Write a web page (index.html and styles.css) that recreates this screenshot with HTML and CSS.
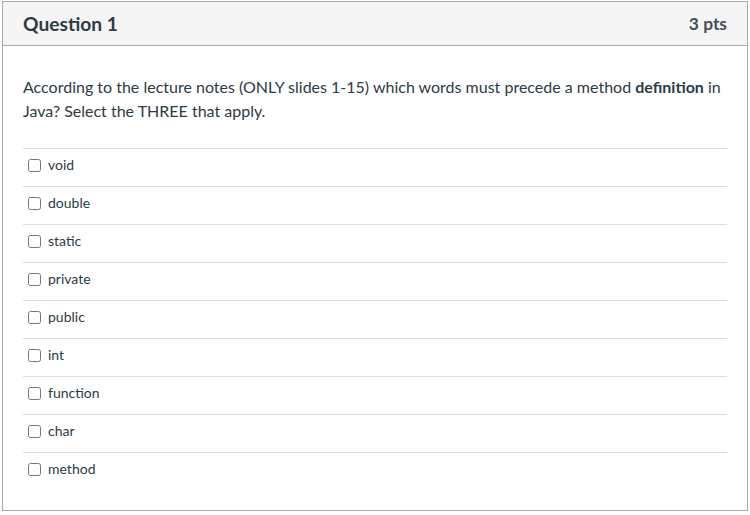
FILE: index.html
```html
<!DOCTYPE html>
<html lang="en">
<head>
<meta charset="utf-8">
<title>Question 1</title>
<link rel="stylesheet" href="styles.css">
</head>
<body>
<div class="question">
  <div class="q-header">
    <h2 class="q-title">Question 1</h2>
    <span class="q-points">3 pts</span>
  </div>
  <div class="q-body">
    <p class="q-text">According to the lecture notes (ONLY slides 1-15) which words must precede a method <strong>definition</strong> in Java? Select the THREE that apply.</p>
    <div class="answers">
      <label class="answer"><input type="checkbox" class="cb"><span>void</span></label>
      <label class="answer"><input type="checkbox" class="cb"><span>double</span></label>
      <label class="answer"><input type="checkbox" class="cb"><span>static</span></label>
      <label class="answer"><input type="checkbox" class="cb"><span>private</span></label>
      <label class="answer"><input type="checkbox" class="cb"><span>public</span></label>
      <label class="answer"><input type="checkbox" class="cb"><span>int</span></label>
      <label class="answer"><input type="checkbox" class="cb"><span>function</span></label>
      <label class="answer"><input type="checkbox" class="cb"><span>char</span></label>
      <label class="answer"><input type="checkbox" class="cb"><span>method</span></label>
    </div>
  </div>
</div>
</body>
</html>
```
FILE: styles.css
```css
html, body {
  margin: 0;
  padding: 0;
  background: #fff;
}
body {
  padding: 1px 0 0 2px;
  font-family: Lato, "Noto Sans", sans-serif;
  color: #2d3b45;
}
.question {
  width: 744px;
  height: 508px;
  border: 1px solid #aaaaaa;
  box-sizing: content-box;
}
.q-header {
  height: 43px;
  background: #f5f5f5;
  border-bottom: 1px solid #aaaaaa;
  display: flex;
  align-items: center;
  justify-content: space-between;
  padding: 0 20px;
}
.q-title {
  margin: 0;
  font-size: 19.2px;
  font-weight: 700;
}
.q-points {
  font-size: 17.4px;
  font-weight: 700;
  color: #444e55;
}
.q-body {
  padding: 29px 20px 0 20px;
}
.q-text {
  margin: 0 0 25px 0;
  font-size: 16px;
  line-height: 24px;
}
.q-text strong {
  font-weight: 700;
}
.answers {
  display: flex;
  flex-direction: column;
}
.answer {
  display: flex;
  align-items: center;
  gap: 7px;
  border-top: 1px solid #dddddd;
  padding: 6px 5px 11px 5px;
  font-size: 14px;
  line-height: 20px;
}
.cb {
  margin: 0;
  width: 13px;
  height: 13px;
}
```
